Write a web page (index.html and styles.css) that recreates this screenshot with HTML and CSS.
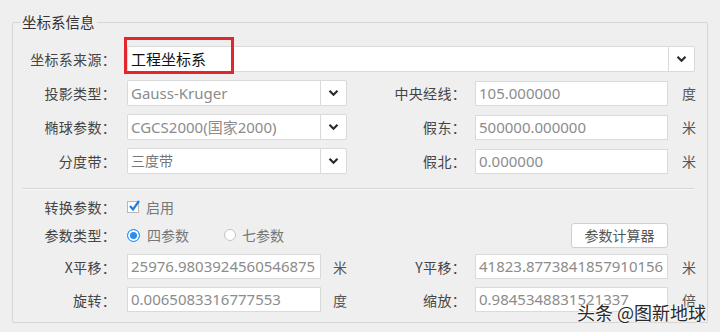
FILE: index.html
```html
<!DOCTYPE html>
<html lang="zh-CN">
<head>
<meta charset="utf-8">
<title>坐标系信息</title>
<link rel="stylesheet" href="styles.css">
</head>
<body>
<fieldset class="group">
  <legend class="group-title">坐标系信息</legend>

  <div class="row">
    <span class="lbl">坐标系来源：</span>
    <div class="combo combo-wide">
      <span class="combo-field value-dark">工程坐标系</span>
      <span class="combo-btn"><svg width="11" height="8" viewBox="0 0 11 8"><polyline points="1.5,1.8 5.5,5.8 9.5,1.8" fill="none" stroke="#2b2b2b" stroke-width="2.2"/></svg></span>
      <span class="highlight"></span>
    </div>
  </div>

  <div class="row">
    <span class="lbl">投影类型：</span>
    <div class="combo combo-short">
      <span class="combo-field">Gauss-Kruger</span>
      <span class="combo-btn"><svg width="11" height="8" viewBox="0 0 11 8"><polyline points="1.5,1.8 5.5,5.8 9.5,1.8" fill="none" stroke="#2b2b2b" stroke-width="2.2"/></svg></span>
    </div>
    <span class="lbl2">中央经线：</span>
    <span class="field field-right">105.000000</span>
    <span class="unit2">度</span>
  </div>

  <div class="row">
    <span class="lbl">椭球参数：</span>
    <div class="combo combo-short">
      <span class="combo-field">CGCS2000(国家2000)</span>
      <span class="combo-btn"><svg width="11" height="8" viewBox="0 0 11 8"><polyline points="1.5,1.8 5.5,5.8 9.5,1.8" fill="none" stroke="#2b2b2b" stroke-width="2.2"/></svg></span>
    </div>
    <span class="lbl2">假东：</span>
    <span class="field field-right">500000.000000</span>
    <span class="unit2">米</span>
  </div>

  <div class="row">
    <span class="lbl">分度带：</span>
    <div class="combo combo-short">
      <span class="combo-field value-mid">三度带</span>
      <span class="combo-btn"><svg width="11" height="8" viewBox="0 0 11 8"><polyline points="1.5,1.8 5.5,5.8 9.5,1.8" fill="none" stroke="#2b2b2b" stroke-width="2.2"/></svg></span>
    </div>
    <span class="lbl2">假北：</span>
    <span class="field field-right">0.000000</span>
    <span class="unit2">米</span>
  </div>

  <div class="sep"></div>

  <div class="row row-check">
    <span class="lbl">转换参数：</span>
    <span class="opts">
      <span class="checkbox"><svg width="14" height="14" viewBox="0 0 14 14"><polyline points="3,7 6,10.5 12,2" fill="none" stroke="#1e7fe0" stroke-width="2.2"/></svg></span>
      <span class="opt-text">启用</span>
    </span>
  </div>

  <div class="row row-radio">
    <span class="lbl">参数类型：</span>
    <span class="opts">
      <span class="radio radio-on"></span>
      <span class="opt-text">四参数</span>
      <span class="radio radio-off"></span>
      <span class="opt-text">七参数</span>
    </span>
    <span class="calc-btn">参数计算器</span>
  </div>

  <div class="row row-num row-x">
    <span class="lbl">X平移：</span>
    <span class="field field-left">25976.9803924560546875</span>
    <span class="unit1">米</span>
    <span class="lbl2">Y平移：</span>
    <span class="field field-right">41823.8773841857910156</span>
    <span class="unit2">米</span>
  </div>

  <div class="row row-num row-r">
    <span class="lbl">旋转：</span>
    <span class="field field-left">0.0065083316777553</span>
    <span class="unit1">度</span>
    <span class="lbl2">缩放：</span>
    <span class="field field-right">0.9845348831521337</span>
    <span class="unit2">倍</span>
  </div>
</fieldset>
<div class="watermark">头条 @图新地球</div>
</body>
</html>
```
FILE: styles.css
```css
html, body {
  margin: 0;
  padding: 0;
}
body {
  width: 720px;
  height: 332px;
  background: #efefef;
  padding: 12px 12px 0;
  box-sizing: border-box;
  font-family: "Noto Sans", "Noto Sans CJK SC", sans-serif;
  color: #444;
  overflow: hidden;
}
.group {
  width: 696px;
  box-sizing: border-box;
  margin: 0;
  padding: 14px 0 10px;
  border: 1px solid #d6d6d6;
  border-radius: 2px;
}
.group-title {
  margin-left: 7px;
  padding: 0 2px;
  font-family: "Noto Sans CJK SC", sans-serif;
  font-size: 14.5px;
  line-height: 20px;
  color: #333;
}
.row {
  display: grid;
  grid-template-columns: 114px 195px 25px 128px 193px 39px;
  height: 26px;
  align-items: center;
  margin-top: 8px;
}
.row:first-of-type {
  margin-top: 0;
}
.lbl, .lbl2 {
  font-family: "Noto Sans CJK SC", sans-serif;
  font-size: 14px;
  color: #444;
  text-align: right;
  white-space: nowrap;
  letter-spacing: 0.3px;
}
.lbl {
  grid-column: 1;
  padding-right: 11px;
}
.lbl2 {
  grid-column: 4;
  padding-right: 9px;
}
.combo {
  position: relative;
  display: flex;
  height: 26px;
  box-sizing: border-box;
  border: 1px solid #dadada;
  border-radius: 2px;
  background: #fff;
}
.combo-wide {
  grid-column: 2 / 7;
  width: 568px;
}
.combo-short {
  grid-column: 2 / 4;
}
.combo-field {
  flex: 1;
  padding-left: 3px;
  font-size: 15px;
  line-height: 24px;
  color: #8c8c8c;
  white-space: nowrap;
}
.value-dark {
  color: #111;
}
.value-mid {
  color: #777;
  font-size: 14px;
}
.combo-btn {
  width: 25px;
  display: flex;
  align-items: center;
  justify-content: center;
  border-left: 1px solid #dadada;
}
.highlight {
  position: absolute;
  left: -4px;
  top: -10px;
  width: 110px;
  height: 37px;
  box-sizing: border-box;
  border: 3px solid #e3262b;
}
.field {
  height: 25px;
  box-sizing: border-box;
  border: 1px solid #dadada;
  background: #fff;
  padding-left: 3px;
  font-size: 15px;
  line-height: 23px;
  color: #8c8c8c;
  white-space: nowrap;
  overflow: hidden;
}
.field-right {
  grid-column: 5;
}
.field-left {
  grid-column: 2;
  width: 194px;
}
.unit1, .unit2 {
  font-family: "Noto Sans CJK SC", sans-serif;
  font-size: 14px;
  color: #555;
}
.unit1 {
  grid-column: 3;
  padding-left: 11px;
}
.unit2 {
  grid-column: 6;
  padding-left: 14px;
}
.sep {
  margin: 14px 13px 0 10px;
  height: 1px;
  background: #d3d3d3;
  border-bottom: 1px solid #fafafa;
}
.row-check {
  margin-top: 4px;
}
.row-radio {
  margin-top: 2px;
}
.row-x {
  margin-top: 6px;
  height: 25px;
}
.row-r {
  margin-top: 8px;
  height: 25px;
}
.opts {
  grid-column: 2 / 4;
  display: flex;
  align-items: center;
  white-space: nowrap;
}
.checkbox {
  width: 12px;
  height: 12px;
  margin-left: 0;
  border: 1px solid #b8b8b8;
  background: #fff;
  position: relative;
  box-sizing: border-box;
}
.checkbox svg {
  position: absolute;
  left: -1px;
  top: -3px;
}
.opt-text {
  font-family: "Noto Sans CJK SC", sans-serif;
  font-size: 14px;
  color: #777;
  margin-left: 7px;
}
.radio {
  width: 13px;
  height: 13px;
  box-sizing: border-box;
  border-radius: 50%;
  background: #fff;
}
.radio-on {
  border: 1.5px solid #2d8cf0;
  box-shadow: inset 0 0 0 2px #fff;
  background: #2d8cf0;
}
.radio-off {
  width: 12px;
  height: 12px;
  margin-left: 35px;
  border: 1px solid #c4c4c4;
}
.radio-off + .opt-text {
  margin-left: 6px;
}
.calc-btn {
  grid-column: 5;
  justify-self: end;
  width: 97px;
  height: 25px;
  box-sizing: border-box;
  border: 1px solid #cfcfcf;
  border-radius: 3px;
  background: #fff;
  font-family: "Noto Sans CJK SC", sans-serif;
  font-size: 14px;
  line-height: 23px;
  text-align: center;
  color: #555;
}
.watermark {
  position: absolute;
  left: 577px;
  top: 299px;
  font-family: "Noto Sans CJK SC", sans-serif;
  font-size: 18px;
  color: #2a2a2a;
  text-shadow: 0 0 2px #fff, 0 0 2px #fff, 0 0 3px #fff;
  white-space: nowrap;
}
```
